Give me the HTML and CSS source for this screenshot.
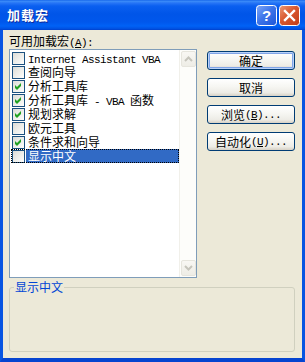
FILE: index.html
```html
<!DOCTYPE html>
<html lang="zh-CN">
<head>
<meta charset="utf-8">
<title>加载宏</title>
<link rel="stylesheet" href="styles.css">
</head>
<body>
<div class="window">
  <div class="titlebar">
    <span class="title">加载宏</span>
    <div class="tb-buttons">
      <svg class="tb-btn" width="21" height="21" viewBox="0 0 21 21">
        <defs>
          <linearGradient id="hb" x1="0" y1="0" x2="1" y2="1">
            <stop offset="0" stop-color="#80A8F8"/>
            <stop offset="0.45" stop-color="#3F76EA"/>
            <stop offset="1" stop-color="#1C55D8"/>
          </linearGradient>
        </defs>
        <rect x="0.5" y="0.5" width="20" height="20" rx="3" fill="url(#hb)" stroke="#FFFFFF"/>
        <text x="10.5" y="16" text-anchor="middle" font-family="Liberation Sans, sans-serif" font-weight="bold" font-size="15" fill="#FFFFFF">?</text>
      </svg>
      <svg class="tb-btn" width="21" height="21" viewBox="0 0 21 21">
        <defs>
          <linearGradient id="cb" x1="0" y1="0" x2="1" y2="1">
            <stop offset="0" stop-color="#EC9A78"/>
            <stop offset="0.45" stop-color="#D9582F"/>
            <stop offset="1" stop-color="#C23C16"/>
          </linearGradient>
        </defs>
        <rect x="0.5" y="0.5" width="20" height="20" rx="3" fill="url(#cb)" stroke="#FFFFFF"/>
        <path d="M6 6 L15 15 M15 6 L6 15" stroke="#FFFFFF" stroke-width="2.4" stroke-linecap="square"/>
      </svg>
    </div>
  </div>
  <div class="frame">
    <div class="main">
      <div class="left">
        <div class="label">可用加载宏<span class="m">(<u>A</u>):</span></div>
        <div class="listbox">
          <ul class="items">
            <li class="item"><span class="cb"></span><span class="txt"><span class="m">Internet Assistant VBA</span></span></li>
            <li class="item"><span class="cb"></span><span class="txt">查阅向导</span></li>
            <li class="item"><span class="cb"><svg width="11" height="11" viewBox="0 0 11 11"><polygon points="2,4 4,6 8,2 8,5 4,9 2,7" fill="#21A121"/></svg></span><span class="txt">分析工具库</span></li>
            <li class="item"><span class="cb"><svg width="11" height="11" viewBox="0 0 11 11"><polygon points="2,4 4,6 8,2 8,5 4,9 2,7" fill="#21A121"/></svg></span><span class="txt">分析工具库<span class="m"> - VBA </span>函数</span></li>
            <li class="item"><span class="cb"><svg width="11" height="11" viewBox="0 0 11 11"><polygon points="2,4 4,6 8,2 8,5 4,9 2,7" fill="#21A121"/></svg></span><span class="txt">规划求解</span></li>
            <li class="item"><span class="cb"></span><span class="txt">欧元工具</span></li>
            <li class="item"><span class="cb"><svg width="11" height="11" viewBox="0 0 11 11"><polygon points="2,4 4,6 8,2 8,5 4,9 2,7" fill="#21A121"/></svg></span><span class="txt">条件求和向导</span></li>
            <li class="item sel"><span class="cb"></span><span class="txt">显示中文</span></li>
          </ul>
          <div class="scrollbar">
            <div class="sbtn"><svg width="9" height="6" viewBox="0 0 9 6"><path d="M1 5 L4.5 1.5 L8 5" stroke="#C6C5BC" stroke-width="2" fill="none"/></svg></div>
            <div class="sbtn"><svg width="9" height="6" viewBox="0 0 9 6"><path d="M1 1 L4.5 4.5 L8 1" stroke="#C6C5BC" stroke-width="2" fill="none"/></svg></div>
          </div>
        </div>
      </div>
      <div class="buttons">
        <button class="btn default">确定</button>
        <button class="btn">取消</button>
        <button class="btn">浏览<span class="m">(<u>B</u>)...</span></button>
        <button class="btn">自动化<span class="m">(<u>U</u>)...</span></button>
      </div>
    </div>
    <fieldset class="group">
      <legend class="group-title">显示中文</legend>
    </fieldset>
  </div>
</div>
</body>
</html>
```
FILE: styles.css
```css
* { box-sizing: border-box; }
html, body { margin: 0; padding: 0; }
body {
  width: 305px;
  height: 362px;
  overflow: hidden;
  font-family: "Noto Sans CJK SC", sans-serif;
  font-size: 12px;
  color: #000;
}
.window {
  width: 305px;
  height: 362px;
  display: flex;
  flex-direction: column;
}
.titlebar {
  height: 30px;
  flex: none;
  display: flex;
  align-items: center;
  padding: 0 5px 0 7px;
  background: linear-gradient(180deg, #0A5AE6 0px, #3E8EF9 1px, #2775F6 3px, #0A5FF0 6px, #0055E8 14px, #0057EC 22px, #0062F6 26px, #004FE0 29px, #003DC8 30px);
}
.title {
  flex: 1;
  color: #fff;
  font-weight: bold;
  font-size: 13px;
  letter-spacing: 1px;
  line-height: 16px;
  text-shadow: 1px 1px 0 #0F2A9C;
}
.tb-buttons { display: flex; gap: 2px; }
.tb-btn { display: block; }
.frame {
  flex: 1;
  display: flex;
  flex-direction: column;
  background: #ECE9D8;
  border-style: solid;
  border-color: #0855E2;
  border-width: 0 3px 4px;
  border-bottom-color: #0544D0;
  padding: 4px 7px 6px 6px;
}
.main { display: flex; gap: 10px; }
.left { width: 188px; display: flex; flex-direction: column; }
.label {
  height: 14px;
  line-height: 14px;
  margin-bottom: 1px;
  white-space: nowrap;
}
.m {
  font-family: "Liberation Mono", monospace;
  font-size: 11px;
  letter-spacing: -0.6px;
}
.listbox {
  height: 229px;
  border: 1px solid #7F9DB9;
  background: #fff;
  display: flex;
}
.items {
  flex: 1;
  list-style: none;
  margin: 0;
  padding: 1px 0 0 1px;
}
.item {
  height: 14px;
  display: flex;
  align-items: center;
  padding-left: 1px;
  line-height: 14px;
  white-space: nowrap;
}
.cb {
  width: 13px;
  height: 13px;
  flex: none;
  display: flex;
  border: 1px solid #1C5180;
  background: linear-gradient(135deg, #DCDCD7 0%, #F4F4F1 70%, #FFFFFF 100%);
}
.cb svg { display: block; }
.txt {
  flex: 1;
  height: 14px;
  margin-left: 1px;
  padding-left: 2px;
}
.item.sel { outline: 1px dotted #000; outline-offset: -1px; }
.item.sel .txt { background: #316AC5; color: #fff; }
.scrollbar {
  width: 17px;
  flex: none;
  display: flex;
  flex-direction: column;
  justify-content: space-between;
  padding: 1px 0 1px 1px;
  background: #FDFDFA;
  border-left: 1px solid #F1F0EA;
}
.sbtn {
  width: 15px;
  height: 16px;
  display: flex;
  align-items: center;
  justify-content: center;
  border: 1px solid #E6E5DD;
  border-radius: 2px;
  background: linear-gradient(180deg, #F8F7F3, #EEEDE6);
}
.sbtn svg { display: block; }
.buttons {
  width: 88px;
  display: flex;
  flex-direction: column;
  gap: 8px;
  padding-top: 17px;
}
.btn {
  height: 19px;
  padding: 0;
  margin: 0;
  display: flex;
  align-items: center;
  justify-content: center;
  border: 1px solid #003C74;
  border-radius: 3px;
  background: linear-gradient(180deg, #FFFFFF 0%, #F6F6F2 45%, #EDECE6 80%, #D7D1C5 100%);
  font-family: "Noto Sans CJK SC", sans-serif;
  font-size: 12px;
  line-height: 14px;
  color: #000;
  white-space: nowrap;
}
.btn.default {
  box-shadow: inset 0 0 0 1px #B9D1F7, inset 0 0 0 2px #7FA4E8;
}
.group {
  margin: 3px 0 0 0;
  padding: 0;
  height: 71px;
  min-width: 0;
  border: 1px solid #D0D0BF;
  border-radius: 3px;
}
.group-title {
  margin-left: 4px;
  padding: 0 1px;
  color: #0046D5;
  font-size: 12px;
  line-height: 12px;
}
```
